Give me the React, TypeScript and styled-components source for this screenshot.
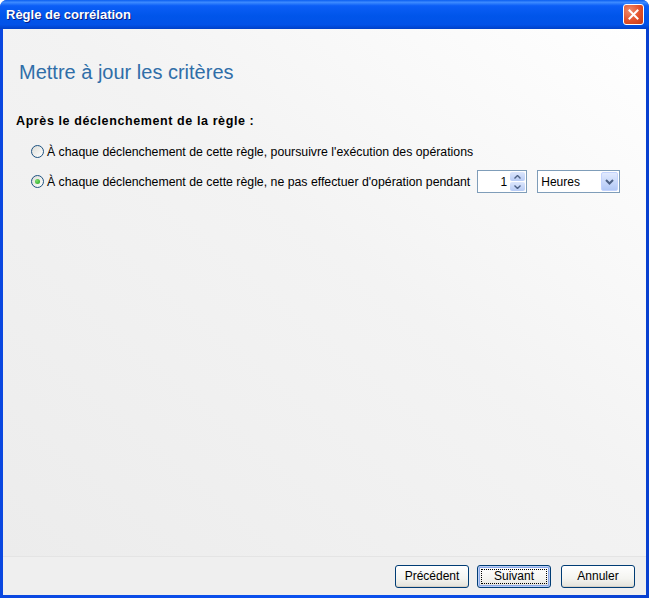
import React, {useState} from 'react';
import styled, {createGlobalStyle} from 'styled-components';

const GlobalStyle = createGlobalStyle`
    html, body {
        margin: 0;
        padding: 0;
        width: 649px;
        height: 598px;
        overflow: hidden;
    }
    body {
        font-family: "Liberation Sans", Arial, sans-serif;
        font-size: 12px;
        color: #000;
    }
`;

const Window = styled.div`
    width: 649px;
    height: 598px;
    box-sizing: border-box;
    display: flex;
    flex-direction: column;
    padding: 0 3px 3px 3px;
    border-radius: 7px 7px 0 0;
    overflow: hidden;
    background: linear-gradient(to right, #0a47e0, #0b52f0 50%, #0840d0);
`;

const TitleBar = styled.div`
    height: 29px;
    margin: 0 -3px;
    padding: 0 5px 0 6px;
    display: flex;
    align-items: center;
    justify-content: space-between;
    background: linear-gradient(to bottom, #0a5ef0 0%, #3d8bff 8%, #0b5ef6 20%, #0055ea 55%, #0252e8 85%, #0040c8 100%);
`;

const Title = styled.span`
    color: #fff;
    font-family: "Liberation Sans", Arial, sans-serif;
    font-weight: bold;
    font-size: 13px;
    text-shadow: 1px 1px 0 #0a1e80;
`;

const CloseButton = styled.div`
    width: 19px;
    height: 19px;
    border: 1px solid #fff;
    border-radius: 3px;
    background: radial-gradient(circle at 30% 30%, #f08c6c, #e2502a 55%, #c43a16);
    display: flex;
    align-items: center;
    justify-content: center;
`;

const Body = styled.div`
    flex: 1;
    display: flex;
    flex-direction: column;
    background: #f0f0f0;
`;

const Content = styled.div`
    flex: 1;
    padding: 32px 0 0 13px;
    background: linear-gradient(to bottom left, #ffffff 0%, #f3f3f3 45%, #ececec 100%);
`;

const Heading = styled.h1`
    margin: 0 0 0 3px;
    font-family: "Liberation Sans", Arial, sans-serif;
    font-weight: normal;
    font-size: 20px;
    color: #2f6ea8;
`;

const Label = styled.div`
    margin-top: 30px;
    font-weight: bold;
    font-size: 12.5px;
    letter-spacing: 0.6px;
`;

const Options = styled.div`
    margin: 12px 0 0 15px;
    display: flex;
    flex-direction: column;
    gap: 7px;
`;

const OptionRow = styled.div`
    display: flex;
    align-items: center;
    height: 23px;
`;

const RadioCircle = styled.span<{ checked: boolean }>`
    width: 11px;
    height: 11px;
    border-radius: 50%;
    border: 1px solid #1c5180;
    background: linear-gradient(135deg, #dcdcd6, #ffffff);
    display: flex;
    align-items: center;
    justify-content: center;
    margin-right: 3px;
    flex-shrink: 0;

    &::after {
        content: '';
        display: ${props => props.checked ? 'block' : 'none'};
        width: 5px;
        height: 5px;
        border-radius: 50%;
        background: radial-gradient(circle at 35% 35%, #7be06b, #21a121);
    }
`;

const OptionText = styled.span`
    white-space: nowrap;
    font-size: 12.3px;
`;

const Spinner = styled.div`
    margin-left: 7px;
    width: 50px;
    height: 23px;
    box-sizing: border-box;
    border: 1px solid #7f9db9;
    background: #fff;
    display: flex;
    align-items: center;
    padding: 1px;
`;

const SpinValue = styled.span`
    flex: 1;
    text-align: right;
    padding-right: 3px;
    font-size: 12px;
`;

const SpinButtons = styled.div`
    width: 15px;
    height: 19px;
    display: flex;
    flex-direction: column;
    gap: 1px;
`;

const SpinHalf = styled.div`
    flex: 1;
    background: linear-gradient(to bottom, #dce6fc, #b7cbf5);
    border-radius: 2px;
    display: flex;
    align-items: center;
    justify-content: center;
`;

const Select = styled.div`
    margin-left: 10px;
    width: 83px;
    height: 23px;
    box-sizing: border-box;
    border: 1px solid #7f9db9;
    background: #fff;
    display: flex;
    align-items: center;
    padding: 1px 1px 1px 3px;
`;

const SelectValue = styled.span`
    flex: 1;
    font-size: 12px;
`;

const DropButton = styled.div`
    width: 17px;
    height: 19px;
    border-radius: 2px;
    background: linear-gradient(to bottom, #e1eafe, #b2c8f6);
    border: 1px solid #c3d3fd;
    box-sizing: border-box;
    display: flex;
    align-items: center;
    justify-content: center;
`;

const Footer = styled.div`
    height: 39px;
    display: flex;
    align-items: center;
    justify-content: flex-end;
    padding-right: 11px;
    background: #efefef;
    border-top: 1px solid #e4e4e4;
    box-sizing: border-box;
`;

const Button = styled.button<{ focused?: boolean; gap?: number }>`
    width: 74px;
    height: 23px;
    box-sizing: border-box;
    margin-right: ${props => props.gap ?? 0}px;
    border: 1px solid #003c74;
    border-radius: 3px;
    background: linear-gradient(to bottom, #ffffff 0%, #f4f4f0 60%, #e3e2da 100%);
    font-family: "Liberation Sans", Arial, sans-serif;
    font-size: 12px;
    color: #000;
    padding: 0;
    box-shadow: ${props => props.focused
        ? 'inset 0 0 0 1px #bccff5, inset 0 0 0 2px #8aa8e8'
        : 'inset 0 -1px 0 #d6d0c5'};
    position: relative;

    &::after {
        content: '';
        display: ${props => props.focused ? 'block' : 'none'};
        position: absolute;
        inset: 3px;
        border: 1px dotted #000;
    }
`;

const Arrow = ({dir}: { dir: 'up' | 'down' }) => (
    <svg width="7" height="4" viewBox="0 0 7 4">
        <path
            d={dir === 'up' ? 'M0.5 3.5 L3.5 0.5 L6.5 3.5' : 'M0.5 0.5 L3.5 3.5 L6.5 0.5'}
            fill="none"
            stroke="#4d6185"
            strokeWidth="1.4"
        />
    </svg>
);

const App: React.FC = () => {
    const [choice, setChoice] = useState(1);

    return (
        <>
            <GlobalStyle/>
            <Window>
                <TitleBar>
                    <Title>Règle de corrélation</Title>
                    <CloseButton>
                        <svg width="11" height="11" viewBox="0 0 11 11">
                            <path d="M1.5 1.5 L9.5 9.5 M9.5 1.5 L1.5 9.5" stroke="#fff" strokeWidth="2" strokeLinecap="square"/>
                        </svg>
                    </CloseButton>
                </TitleBar>
                <Body>
                    <Content>
                        <Heading>Mettre à jour les critères</Heading>
                        <Label>Après le déclenchement de la règle :</Label>
                        <Options>
                            <OptionRow onClick={() => setChoice(0)}>
                                <RadioCircle checked={choice === 0}/>
                                <OptionText>À chaque déclenchement de cette règle, poursuivre l'exécution des opérations</OptionText>
                            </OptionRow>
                            <OptionRow onClick={() => setChoice(1)}>
                                <RadioCircle checked={choice === 1}/>
                                <OptionText>À chaque déclenchement de cette règle, ne pas effectuer d'opération pendant</OptionText>
                                <Spinner>
                                    <SpinValue>1</SpinValue>
                                    <SpinButtons>
                                        <SpinHalf><Arrow dir="up"/></SpinHalf>
                                        <SpinHalf><Arrow dir="down"/></SpinHalf>
                                    </SpinButtons>
                                </Spinner>
                                <Select>
                                    <SelectValue>Heures</SelectValue>
                                    <DropButton>
                                        <svg width="9" height="6" viewBox="0 0 9 6">
                                            <path d="M1 1 L4.5 4.5 L8 1" fill="none" stroke="#4d6185" strokeWidth="2"/>
                                        </svg>
                                    </DropButton>
                                </Select>
                            </OptionRow>
                        </Options>
                    </Content>
                    <Footer>
                        <Button gap={8}>Précédent</Button>
                        <Button focused gap={10}>Suivant</Button>
                        <Button>Annuler</Button>
                    </Footer>
                </Body>
            </Window>
        </>
    );
};

export default App;
